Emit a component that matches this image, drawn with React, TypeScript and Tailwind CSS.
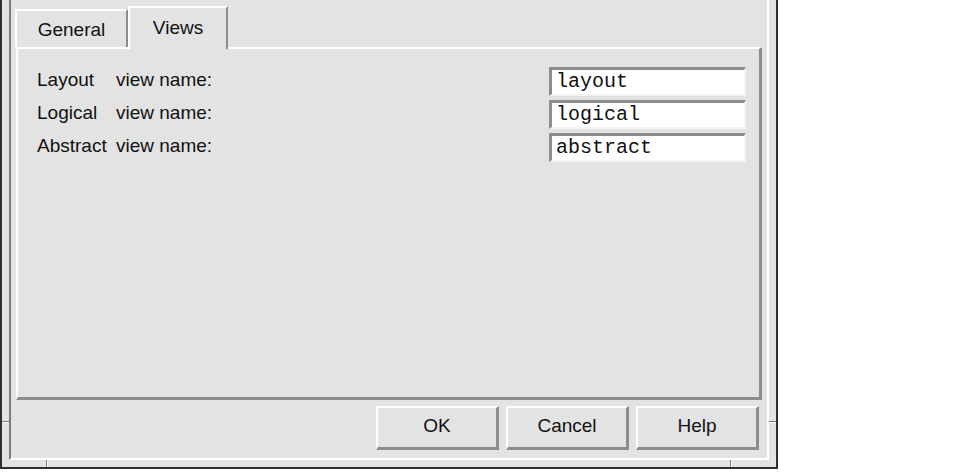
import React from "react";

const sans = { fontFamily: '"Liberation Sans", Arial, sans-serif' };
const mono = { fontFamily: '"Liberation Mono", "Courier New", monospace' };

function Field({ value }: { value: string }) {
  return (
    <div className="w-[197px] h-[29px] bg-white border-t-[3px] border-l-[3px] border-[#8c8c8c] border-r-2 border-r-[#f4f4f4] border-b-2 border-b-[#f4f4f4] flex items-center pl-[4px]">
      <span className="text-[20px] text-[#111] leading-normal" style={mono}>
        {value}
      </span>
    </div>
  );
}

function Row({ first, value }: { first: string; value: string }) {
  return (
    <div className="flex items-center justify-between h-[29px]">
      <div className="flex text-[19px] text-[#111] pb-[3px]" style={sans}>
        <span className="inline-block w-[79px]">{first}</span>
        <span>view name:</span>
      </div>
      <Field value={value} />
    </div>
  );
}

function Button({ label }: { label: string }) {
  return (
    <div
      className="w-[123px] h-[44px] bg-[#e3e3e3] border-t-2 border-l-2 border-white border-r-[3px] border-b-[3px] border-r-[#8c8c8c] border-b-[#8c8c8c] flex items-center justify-center pb-[2px] text-[19px] text-[#111]"
      style={sans}
    >
      {label}
    </div>
  );
}

export default function App() {
  return (
    <div className="w-[963px] h-[472px] bg-white">
      <div className="relative w-[778px] h-[469px] bg-[#e3e3e3] border-l-2 border-r-2 border-b-2 border-[#2f2f2f] pl-[7px] pr-[7px] pb-[7px]">
        {/* resize-handle grooves */}
        <div className="absolute left-0 top-[421px] w-[7px] h-[1px] bg-[#7a7a7a]" />
        <div className="absolute left-0 top-[422px] w-[7px] h-[1px] bg-white" />
        <div className="absolute right-0 top-[421px] w-[7px] h-[1px] bg-[#7a7a7a]" />
        <div className="absolute right-0 top-[422px] w-[7px] h-[1px] bg-white" />
        <div className="absolute left-[44px] bottom-0 w-[1px] h-[7px] bg-[#7a7a7a]" />
        <div className="absolute left-[45px] bottom-0 w-[1px] h-[7px] bg-white" />
        <div className="absolute left-[728px] bottom-0 w-[1px] h-[7px] bg-[#7a7a7a]" />
        <div className="absolute left-[729px] bottom-0 w-[1px] h-[7px] bg-white" />

        <div className="h-full border-l-2 border-l-[#7c7c7c] border-r-2 border-r-white border-b-2 border-b-white flex flex-col pt-[6px] pl-[4px] pr-[5px] pb-[8px]">
          {/* tabs */}
          <div className="flex items-end h-[41px] shrink-0">
            <div
              className="w-[113px] h-[38px] border-t-2 border-l-2 border-white border-r-2 border-r-[#8c8c8c] flex items-start justify-center pt-[5px] text-[19px] text-[#111]"
              style={sans}
            >
              General
            </div>
            <div
              className="relative z-10 w-[100px] h-[43px] -mb-[2px] bg-[#e3e3e3] border-t-2 border-l-2 border-white border-r-2 border-r-[#8c8c8c] flex items-start justify-center pt-[6px] text-[19px] text-[#111]"
              style={sans}
            >
              Views
            </div>
          </div>

          {/* panel */}
          <div className="ml-[1px] h-[353px] shrink-0 border-t-2 border-l-2 border-white border-r-[3px] border-b-[3px] border-r-[#8c8c8c] border-b-[#8c8c8c] pt-[18px] pl-[19px] pr-[13px] flex flex-col gap-[4px]">
            <Row first="Layout" value="layout" />
            <Row first="Logical" value="logical" />
            <Row first="Abstract" value="abstract" />
          </div>

          {/* buttons */}
          <div className="flex justify-end gap-[7px] mt-[6px] pr-[3px]">
            <Button label="OK" />
            <Button label="Cancel" />
            <Button label="Help" />
          </div>
        </div>
      </div>
    </div>
  );
}
